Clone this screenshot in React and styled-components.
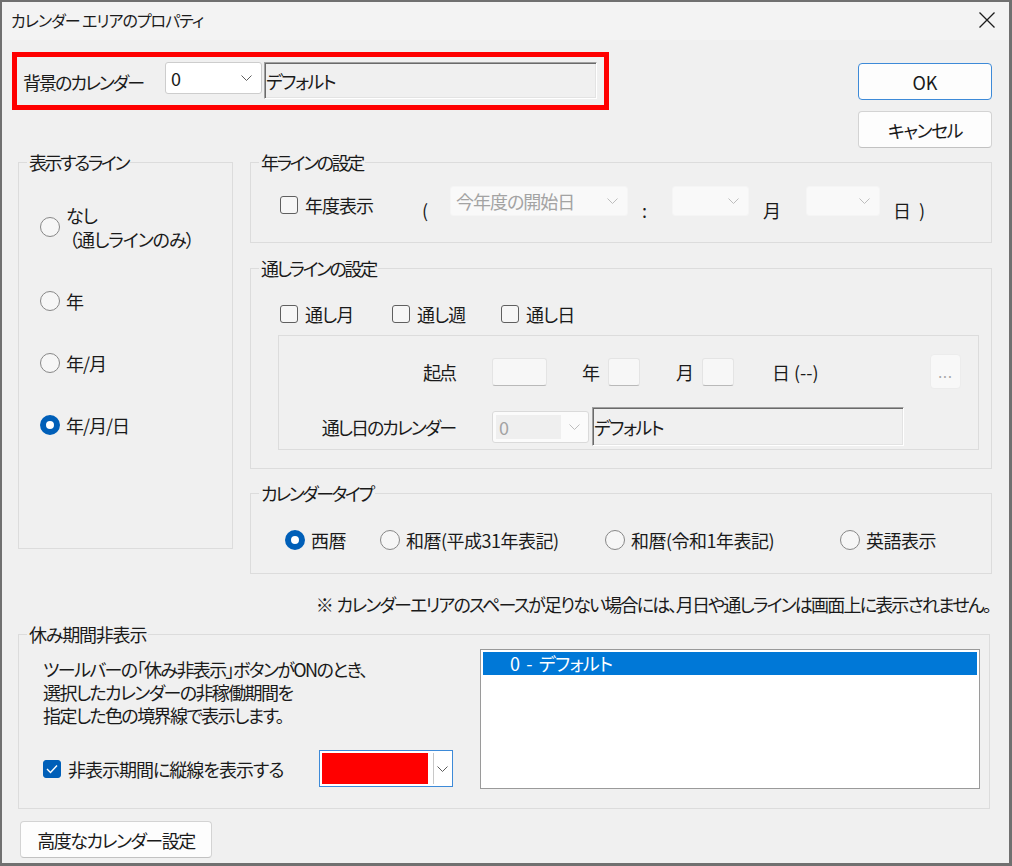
import React from "react";
import styled, { createGlobalStyle } from "styled-components";

const FONT = `"Noto Sans CJK JP", "Noto Sans", "Liberation Sans", sans-serif`;

const GlobalStyle = createGlobalStyle`
  * { box-sizing: border-box; }
  html, body { margin: 0; padding: 0; background: #ffffff; }
  body {
    font-family: ${FONT};
    font-feature-settings: "palt" 1;
    color: #1a1a1a;
    font-size: 18px;
    line-height: 24px;
    letter-spacing: -1px;
  }
`;

const Window = styled.div`
  width: 1012px;
  height: 866px;
  border: 2px solid #707070;
  border-right-width: 3px;
  border-bottom-width: 3px;
  background: #f0f0f0;
  display: flex;
  flex-direction: column;
  overflow: hidden;
`;

const TitleBar = styled.div`
  height: 38px;
  flex: none;
  display: flex;
  align-items: center;
  justify-content: space-between;
  padding: 0 14px 2px 9px;
  background: #f3f3f3;
  font-size: 16px;
  letter-spacing: -1px;
  color: #1c1c1c;
`;

const Body = styled.div`
  display: flex;
  flex-direction: column;
  align-items: flex-start;
  padding: 12px 17px 0 16px;
`;

const TopRow = styled.div`
  width: 100%;
  height: 98px;
  display: flex;
  justify-content: space-between;
  align-items: flex-start;
`;

const HighlightBox = styled.div`
  margin-left: -6px;
  width: 597px;
  height: 58px;
  border: 5px solid #ff0000;
  display: flex;
  align-items: flex-start;
  padding-left: 6px;
`;

const BgLabel = styled.span`
  width: 142px;
  margin-top: 13px;
  letter-spacing: -2px;
`;

const ButtonColumn = styled.div`
  width: 134px;
  margin-top: 11px;
  display: flex;
  flex-direction: column;
  gap: 11px;
`;

const Button = styled.div`
  width: ${(p) => p.$w || 134}px;
  height: 37px;
  display: flex;
  align-items: center;
  justify-content: center;
  background: #fdfdfd;
  border: 1px solid ${(p) => (p.$default ? "#3d8ad8" : "#d3d3d3")};
  border-bottom-color: ${(p) => (p.$default ? "#3d8ad8" : "#c2c2c2")};
  border-radius: 4px;
  color: #1a1a1a;
  letter-spacing: ${(p) => (p.$default ? "0" : "-1.5px")};
`;

const ComboBox = styled.div`
  width: ${(p) => p.$w}px;
  height: ${(p) => p.$h || 30}px;
  flex: none;
  display: flex;
  align-items: center;
  justify-content: space-between;
  padding: 0 9px 0 5px;
  background: ${(p) => (p.$disabled ? "#f9f9f9" : "#ffffff")};
  border: 1px solid ${(p) => (p.$disabled ? "#f5f5f5" : "#cdcdcd")};
  border-radius: 3px;
  color: ${(p) => (p.$disabled ? "#a3a3a3" : "#1a1a1a")};
  margin-top: ${(p) => p.$mt || 0}px;
`;

const FramedCombo = styled.div`
  width: 97px;
  height: 32px;
  flex: none;
  display: flex;
  align-items: center;
  padding: 3px 8px 3px 3px;
  background: #fbfbfb;
  border: 1px solid #dadada;
  border-radius: 3px;
  gap: 8px;
`;

const FramedValue = styled.span`
  flex: 1;
  height: 100%;
  display: flex;
  align-items: center;
  padding-left: 3px;
  background: #efefef;
  color: #a3a3a3;
`;

const SunkenField = styled.div`
  width: ${(p) => p.$w}px;
  height: ${(p) => p.$h || 37}px;
  flex: none;
  display: flex;
  align-items: center;
  padding-left: 1px;
  background: #f0f0f0;
  border: 1px solid;
  border-color: #a0a0a0 #ffffff #ffffff #a0a0a0;
  box-shadow: inset 1px 1px 0 #6a6a6a, inset -1px -1px 0 #e3e3e3;
  margin-top: ${(p) => p.$mt || 0}px;
  margin-left: ${(p) => p.$ml || 0}px;
  letter-spacing: -1.5px;
`;

const Middle = styled.div`
  width: 100%;
  display: flex;
  align-items: flex-start;
  gap: 17px;
`;

const RightColumn = styled.div`
  width: 742px;
  display: flex;
  flex-direction: column;
`;

const Group = styled.fieldset`
  margin: ${(p) => p.$mt || 0}px 0 0 0;
  padding: 0;
  min-width: 0;
  border: 1px solid #dcdcdc;
  width: ${(p) => p.$w}px;
  height: ${(p) => p.$h}px;
`;

const Legend = styled.legend`
  margin-left: 8px;
  padding: 0 2px;
  font-size: 18px;
  line-height: 24px;
  letter-spacing: ${(p) => (p.$kana ? "-2.4px" : "-1.2px")};
`;

const RadioList = styled.div`
  display: flex;
  flex-direction: column;
  gap: 38px;
  padding: 29px 0 0 21px;
`;

const RadioItem = styled.label`
  display: flex;
  align-items: center;
  gap: 6px;
  white-space: nowrap;
`;

const RadioText = styled.span`
  white-space: pre;
`;

const RadioDot = styled.span`
  width: 20px;
  height: 20px;
  flex: none;
  border-radius: 50%;
  border: ${(p) => (p.$checked ? "6px solid #005fb8" : "1px solid #878787")};
  background: ${(p) => (p.$checked ? "#ffffff" : "#f6f6f6")};
`;

const CheckItem = styled.label`
  display: flex;
  align-items: center;
  gap: 7px;
  white-space: nowrap;
  margin-top: ${(p) => p.$mt || 0}px;
`;

const CheckBoxBox = styled.span`
  width: 18px;
  height: 18px;
  flex: none;
  border-radius: 3px;
  border: 1px solid ${(p) => (p.$checked ? "#005fb8" : "#5f5f5f")};
  background: ${(p) => (p.$checked ? "#005fb8" : "#f6f6f6")};
  display: flex;
  align-items: center;
  justify-content: center;
`;

const YearRow = styled.div`
  display: grid;
  grid-template-columns: 142px 28px 192px 30px 91px 43px 87px auto;
  align-items: start;
  padding: 12px 0 0 29px;
`;

const RowText = styled.span`
  margin-top: ${(p) => p.$mt || 0}px;
  white-space: pre;
  letter-spacing: 0;
`;

const ThroughChecks = styled.div`
  display: grid;
  grid-template-columns: 112px 109px auto;
  padding: 22px 0 0 29px;
`;

const Panel = styled.div`
  margin: 9px 0 0 27px;
  width: 701px;
  height: 115px;
  border: 1px solid #dcdcdc;
  display: grid;
  grid-template-columns: 176px 1fr;
  column-gap: 37px;
  row-gap: 12px;
  align-items: center;
  padding: 15px 17px 0 0;
`;

const PanelLabel = styled.span`
  text-align: right;
  letter-spacing: -2px;
`;

const PanelLine = styled.div`
  display: flex;
  align-items: center;
`;

const SmallInput = styled.span`
  width: ${(p) => p.$w}px;
  height: 28px;
  flex: none;
  background: #f7f7f7;
  border: 1px solid #e4e4e4;
  border-bottom-color: #b9b9b9;
  border-radius: 3px;
`;

const UnitLabel = styled.span`
  margin: 0 8px 0 ${(p) => p.$ml || 35}px;
  white-space: pre;
  letter-spacing: 0;
`;

const DotsButton = styled.span`
  margin-left: auto;
  width: 31px;
  height: 35px;
  display: flex;
  align-items: center;
  justify-content: center;
  background: #f8f8f8;
  border: 1px solid #ececec;
  border-radius: 4px;
  color: #a6a6a6;
  font-size: 14px;
  letter-spacing: 1px;
`;

const TypeRow = styled.div`
  display: grid;
  grid-template-columns: 95px 225px 235px auto;
  padding: 23px 0 0 34px;
  letter-spacing: -0.5px;
`;

const Note = styled.div`
  align-self: stretch;
  margin-top: 18px;
  padding-right: 2px;
  text-align: right;
  white-space: pre;
  letter-spacing: -1.8px;
`;

const RestContent = styled.div`
  display: flex;
  justify-content: space-between;
  align-items: flex-start;
  padding: 0 9px 0 24px;
`;

const RestLeft = styled.div`
  display: flex;
  flex-direction: column;
  padding-top: 12px;
`;

const Paragraph = styled.div`
  line-height: 23px;
  white-space: pre;
  letter-spacing: -1.6px;
`;

const ColorRow = styled.div`
  display: flex;
  align-items: center;
  margin-top: 23px;
  height: 37px;
`;

const ColorCombo = styled.div`
  margin-left: 36px;
  width: 134px;
  height: 37px;
  display: flex;
  padding: 2px 1px 2px 2px;
  background: #ffffff;
  border: 1px solid #3d8ad8;
`;

const Swatch = styled.span`
  width: 106px;
  background: #ff0000;
`;

const DropPart = styled.span`
  flex: 1;
  margin-left: 5px;
  border-left: 1px solid #c8c8c8;
  display: flex;
  align-items: center;
  justify-content: center;
`;

const ListBox = styled.div`
  margin-top: 3px;
  width: 500px;
  height: 140px;
  background: #ffffff;
  border: 1px solid #9a9a9a;
  padding: 2px;
`;

const ListItem = styled.div`
  height: 23px;
  display: flex;
  align-items: center;
  padding-left: 27px;
  background: ${(p) => (p.$selected ? "#0078d7" : "transparent")};
  color: ${(p) => (p.$selected ? "#ffffff" : "#1a1a1a")};
  line-height: 23px;
  letter-spacing: -0.6px;
  white-space: pre;
`;

const BottomButtonWrap = styled.div`
  margin: 12px 0 0 2px;
`;

const Chevron = ({ color = "#5c5c5c" }) => (
  <svg width="11" height="6" viewBox="0 0 11 6" style={{ flex: "none" }}>
    <polyline points="0.5,0.5 5.5,5.5 10.5,0.5" fill="none" stroke={color} strokeWidth="1" />
  </svg>
);

const CloseIcon = () => (
  <svg width="16" height="16" viewBox="0 0 16 16">
    <path d="M0.5 0.5 L15.5 15.5 M15.5 0.5 L0.5 15.5" stroke="#1c1c1c" strokeWidth="1.3" fill="none" />
  </svg>
);

const CheckMark = () => (
  <svg width="12" height="10" viewBox="0 0 12 10">
    <polyline points="1,5 4.5,8.5 11,1.5" fill="none" stroke="#ffffff" strokeWidth="1.4" />
  </svg>
);

const Radio = ({ checked, children }) => (
  <RadioItem>
    <RadioDot $checked={checked} />
    <RadioText>{children}</RadioText>
  </RadioItem>
);

const Check = ({ checked, children, mt }) => (
  <CheckItem $mt={mt}>
    <CheckBoxBox $checked={checked}>{checked && <CheckMark />}</CheckBoxBox>
    <span>{children}</span>
  </CheckItem>
);

export default function App() {
  return (
    <>
      <GlobalStyle />
      <Window>
        <TitleBar>
          <span>カレンダー エリアのプロパティ</span>
          <CloseIcon />
        </TitleBar>
        <Body>
          <TopRow>
            <HighlightBox>
              <BgLabel>背景のカレンダー</BgLabel>
              <ComboBox $w={97} $h={32} $mt={5}>
                <span>0</span>
                <Chevron />
              </ComboBox>
              <SunkenField $w={333} $mt={5} $ml={2}>
                デフォルト
              </SunkenField>
            </HighlightBox>
            <ButtonColumn>
              <Button $default>OK</Button>
              <Button>キャンセル</Button>
            </ButtonColumn>
          </TopRow>

          <Middle>
            <Group $w={215} $h={399}>
              <Legend $kana>表示するライン</Legend>
              <RadioList>
                <Radio>{"なし\n （通しラインのみ）"}</Radio>
                <Radio>年</Radio>
                <Radio>年/月</Radio>
                <Radio checked>年/月/日</Radio>
              </RadioList>
            </Group>

            <RightColumn>
              <Group $w={742} $h={93}>
                <Legend $kana>年ラインの設定</Legend>
                <YearRow>
                  <Check mt={7}>年度表示</Check>
                  <RowText $mt={12}>(</RowText>
                  <ComboBox $w={178} $disabled>
                    <span>今年度の開始日</span>
                    <Chevron color="#bdbdbd" />
                  </ComboBox>
                  <RowText $mt={12}>:</RowText>
                  <ComboBox $w={77} $disabled>
                    <span />
                    <Chevron color="#bdbdbd" />
                  </ComboBox>
                  <RowText $mt={12}>月</RowText>
                  <ComboBox $w={74} $disabled>
                    <span />
                    <Chevron color="#bdbdbd" />
                  </ComboBox>
                  <RowText $mt={12}>{"日  )"}</RowText>
                </YearRow>
              </Group>

              <Group $w={742} $h={213} $mt={13}>
                <Legend $kana>通しラインの設定</Legend>
                <ThroughChecks>
                  <Check>通し月</Check>
                  <Check>通し週</Check>
                  <Check>通し日</Check>
                </ThroughChecks>
                <Panel>
                  <PanelLabel>起点</PanelLabel>
                  <PanelLine>
                    <SmallInput $w={55} />
                    <UnitLabel>年</UnitLabel>
                    <SmallInput $w={32} />
                    <UnitLabel $ml={36}>月</UnitLabel>
                    <SmallInput $w={32} />
                    <UnitLabel $ml={38}>日 (--)</UnitLabel>
                    <DotsButton>...</DotsButton>
                  </PanelLine>
                  <PanelLabel>通し日のカレンダー</PanelLabel>
                  <PanelLine>
                    <FramedCombo>
                      <FramedValue>0</FramedValue>
                      <Chevron color="#bdbdbd" />
                    </FramedCombo>
                    <SunkenField $w={312} $h={39} $ml={3}>
                      デフォルト
                    </SunkenField>
                  </PanelLine>
                </Panel>
              </Group>

              <Group $w={742} $h={93} $mt={12}>
                <Legend $kana>カレンダータイプ</Legend>
                <TypeRow>
                  <Radio checked>西暦</Radio>
                  <Radio>和暦(平成31年表記)</Radio>
                  <Radio>和暦(令和1年表記)</Radio>
                  <Radio>英語表示</Radio>
                </TypeRow>
              </Group>
            </RightColumn>
          </Middle>

          <Note>{"※  カレンダーエリアのスペースが足りない場合には、月日や通しラインは画面上に表示されません。"}</Note>

          <Group $w={972} $h={187} $mt={6}>
            <Legend>休み期間非表示</Legend>
            <RestContent>
              <RestLeft>
                <Paragraph>
                  {"ツールバーの「休み非表示」ボタンがONのとき、\n選択したカレンダーの非稼働期間を\n指定した色の境界線で表示します。"}
                </Paragraph>
                <ColorRow>
                  <Check checked>非表示期間に縦線を表示する</Check>
                  <ColorCombo>
                    <Swatch />
                    <DropPart>
                      <Chevron />
                    </DropPart>
                  </ColorCombo>
                </ColorRow>
              </RestLeft>
              <ListBox>
                <ListItem $selected>{"0  -  デフォルト"}</ListItem>
              </ListBox>
            </RestContent>
          </Group>

          <BottomButtonWrap>
            <Button $w={192}>高度なカレンダー設定</Button>
          </BottomButtonWrap>
        </Body>
      </Window>
    </>
  );
}
